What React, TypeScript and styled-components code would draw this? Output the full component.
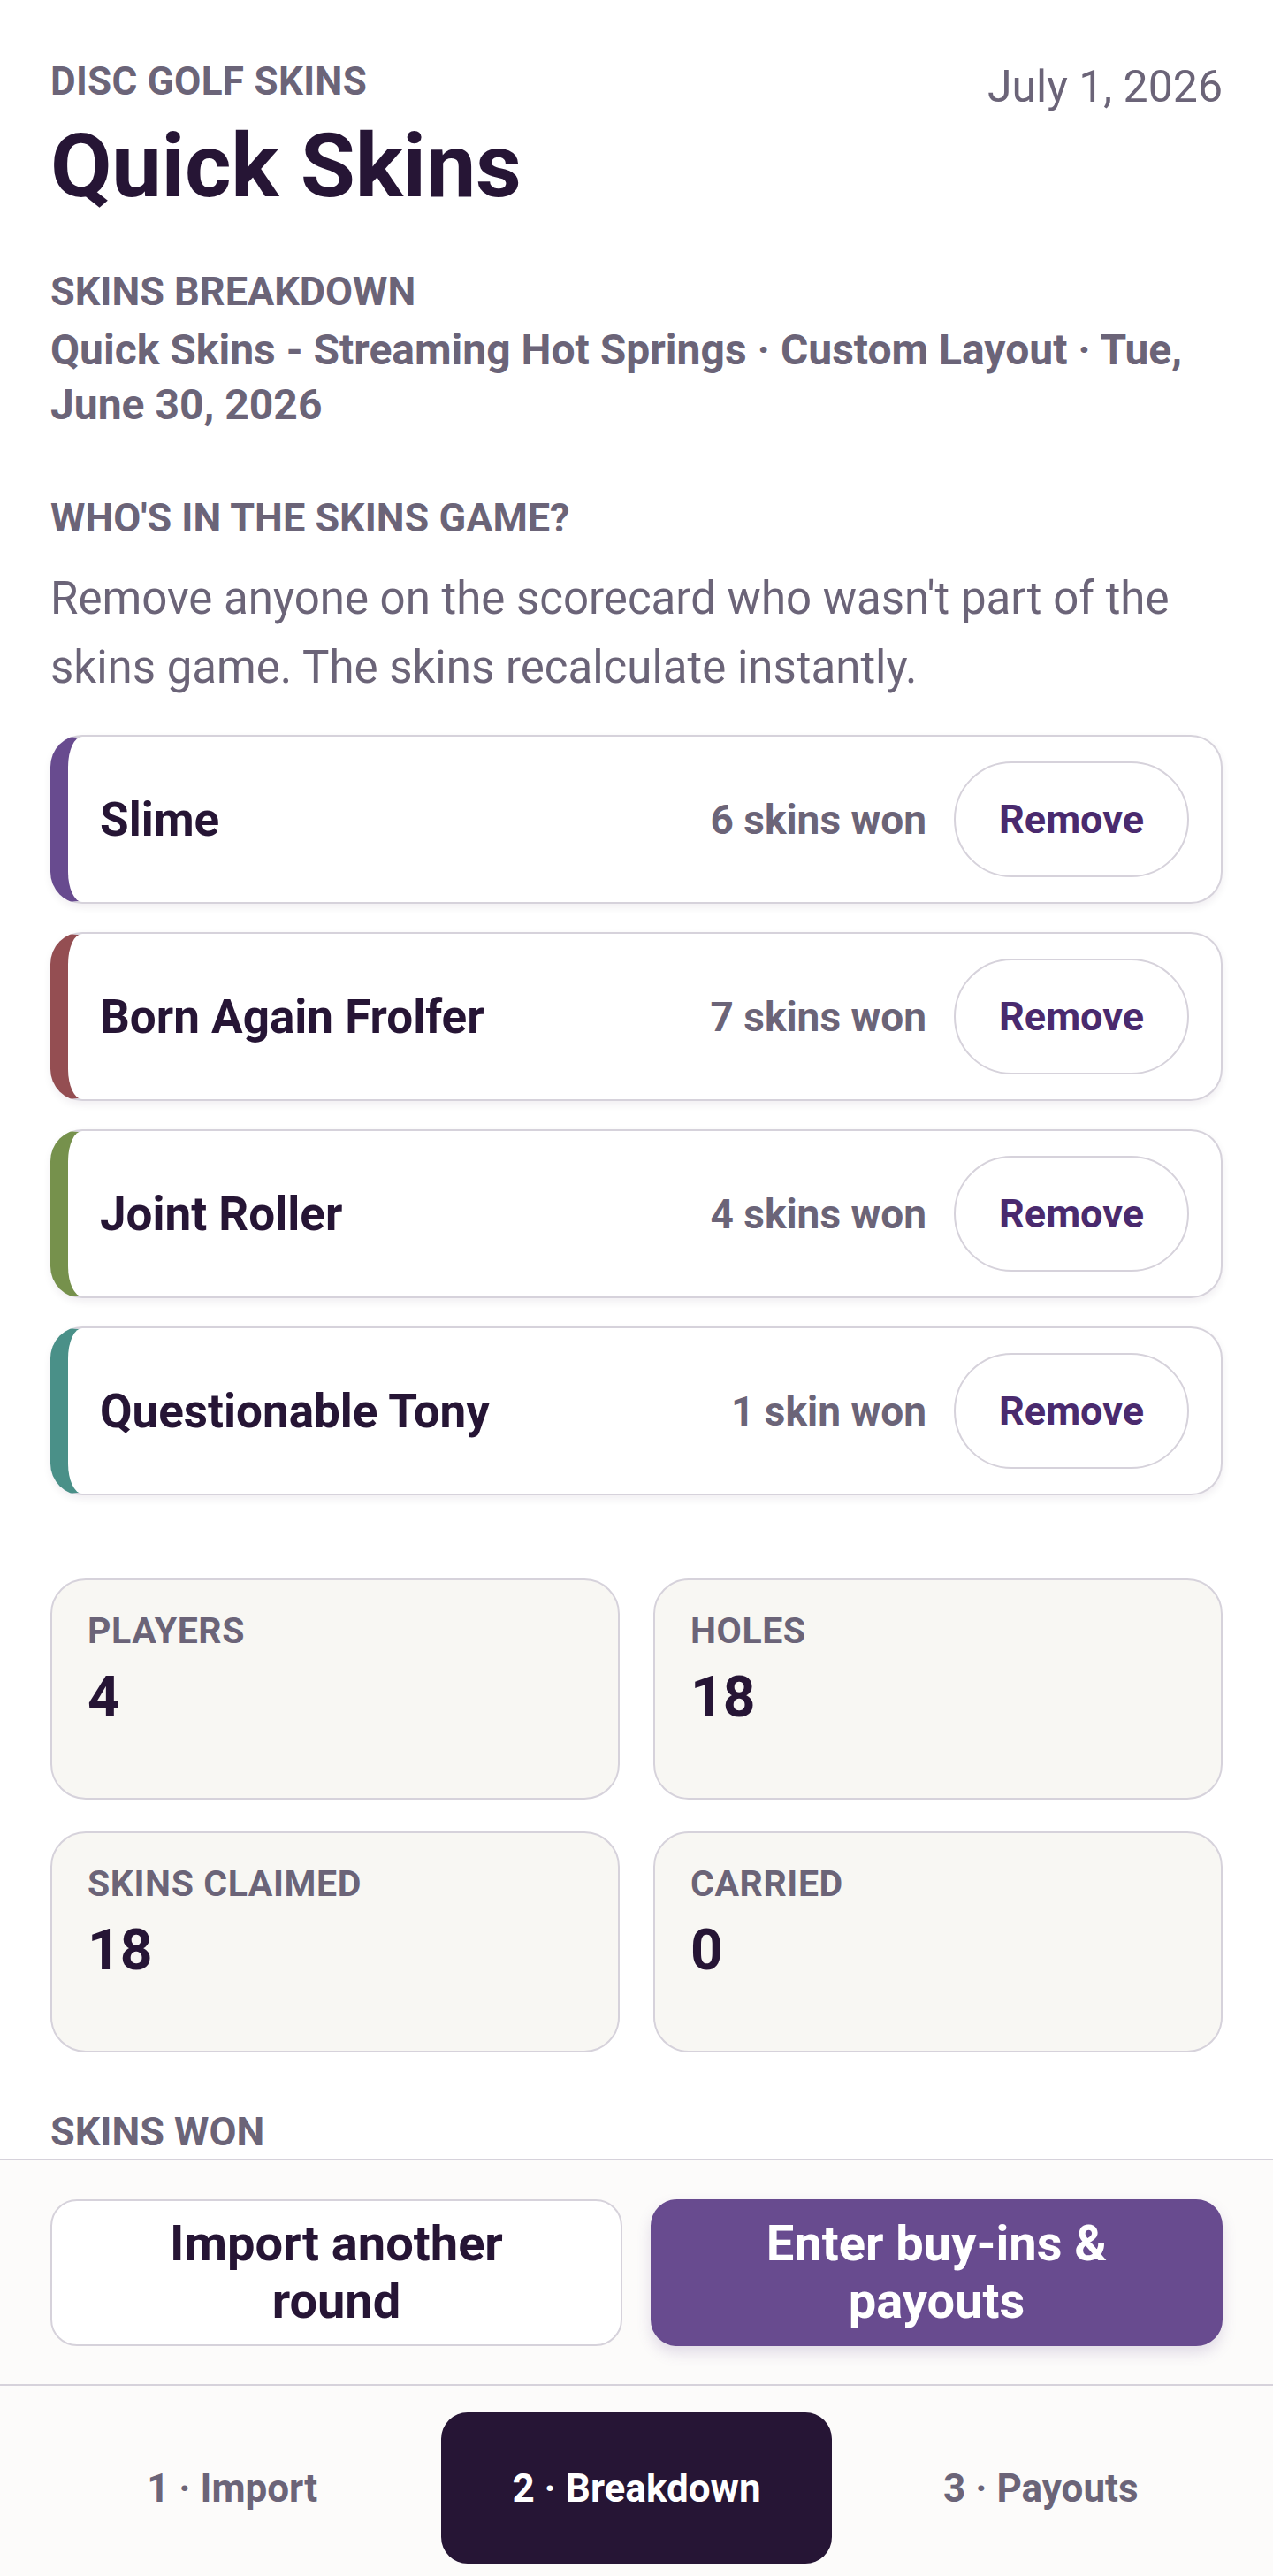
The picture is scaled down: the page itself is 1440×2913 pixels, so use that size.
import React from "react";
import styled, { createGlobalStyle } from "styled-components";

const GlobalStyle = createGlobalStyle`
  * { box-sizing: border-box; }
  html, body { margin: 0; padding: 0; background: #ffffff; }
  body {
    font-family: Roboto, "Noto Sans", "Liberation Sans", Arial, sans-serif;
    color: #261535;
    -webkit-font-smoothing: antialiased;
  }
`;

const ink = "#261535";
const muted = "#6b6478";
const line = "#d6d2db";

const Page = styled.div`
  min-height: 100vh;
  display: flex;
  flex-direction: column;
`;

const Main = styled.main`
  flex: 1;
  padding: 66px 57px 4px;
`;

const HeaderRow = styled.header`
  display: flex;
  justify-content: space-between;
  align-items: flex-start;
`;

const Eyebrow = styled.div`
  font-size: 44px;
  line-height: 53px;
  font-weight: 700;
  color: ${muted};
  text-transform: uppercase;
  letter-spacing: 0.3px;
`;

const Title = styled.h1`
  margin: 14px 0 0;
  font-size: 101px;
  line-height: 110px;
  font-weight: 700;
  color: ${ink};
  letter-spacing: -0.3px;
`;

const DateText = styled.div`
  margin-top: 2px;
  font-size: 50px;
  line-height: 60px;
  font-weight: 400;
  color: ${muted};
`;

const SectionLabel = styled.h2<{ $mt: number }>`
  margin: ${(p) => p.$mt}px 0 0;
  font-size: 45px;
  line-height: 53px;
  font-weight: 700;
  color: ${muted};
  text-transform: uppercase;
`;

const Subtitle = styled.p`
  margin: 9px 0 0;
  font-size: 48px;
  line-height: 62px;
  font-weight: 700;
  color: ${muted};
`;

const Body = styled.p`
  margin: 26px 0 0;
  font-size: 51px;
  line-height: 78px;
  font-weight: 400;
  color: ${muted};
`;

const PlayerList = styled.ul`
  list-style: none;
  margin: 37px 0 0;
  padding: 0;
  display: grid;
  gap: 32px;
`;

const PlayerCard = styled.li<{ $accent: string }>`
  height: 191px;
  display: flex;
  align-items: center;
  padding: 0 36px;
  background: #ffffff;
  border: 2px solid ${line};
  border-left: 20px solid ${(p) => p.$accent};
  border-radius: 36px;
  box-shadow: 0 4px 10px rgba(38, 21, 53, 0.07);
`;

const PlayerName = styled.span`
  flex: 1;
  font-size: 53px;
  font-weight: 700;
  color: ${ink};
`;

const SkinsCount = styled.span`
  margin-right: 31px;
  font-size: 46px;
  font-weight: 700;
  color: ${muted};
`;

const RemoveButton = styled.button`
  width: 266px;
  height: 131px;
  border-radius: 999px;
  border: 2px solid ${line};
  background: #ffffff;
  font-family: inherit;
  font-size: 45px;
  font-weight: 700;
  color: #4a2a6e;
  cursor: pointer;
`;

const StatsGrid = styled.div`
  margin-top: 94px;
  display: grid;
  grid-template-columns: 1fr 1fr;
  column-gap: 38px;
  row-gap: 36px;
`;

const StatCard = styled.div`
  height: 250px;
  padding: 33px 40px;
  background: #f8f7f3;
  border: 2px solid ${line};
  border-radius: 40px;
`;

const StatLabel = styled.div`
  font-size: 41px;
  line-height: 48px;
  font-weight: 700;
  color: ${muted};
  text-transform: uppercase;
  letter-spacing: 0.6px;
`;

const StatValue = styled.div`
  margin-top: 14px;
  font-size: 64px;
  line-height: 76px;
  font-weight: 700;
  color: ${ink};
`;

const Footer = styled.footer`
  position: sticky;
  bottom: 0;
  background: #fcfbfa;
`;

const ActionBar = styled.div`
  border-top: 2px solid ${line};
  padding: 44px 57px 43px;
  display: grid;
  grid-template-columns: 1fr 1fr;
  gap: 32px;
`;

const ActionButton = styled.button<{ $primary?: boolean }>`
  height: 166px;
  padding: 0 64px;
  border-radius: 30px;
  border: 2px solid ${(p) => (p.$primary ? "#684b8f" : line)};
  background: ${(p) => (p.$primary ? "#684b8f" : "#ffffff")};
  color: ${(p) => (p.$primary ? "#ffffff" : ink)};
  box-shadow: ${(p) => (p.$primary ? "0 8px 16px rgba(104, 75, 143, 0.18)" : "none")};
  font-family: inherit;
  font-size: 56px;
  line-height: 65px;
  font-weight: 700;
  text-align: center;
  cursor: pointer;
`;

const Nav = styled.nav`
  border-top: 2px solid ${line};
  padding: 30px 42px 14px;
  display: grid;
  grid-template-columns: repeat(3, 1fr);
  gap: 16px;
`;

const Tab = styled.button<{ $active?: boolean }>`
  height: 171px;
  border: none;
  border-radius: 30px;
  background: ${(p) => (p.$active ? "#261535" : "transparent")};
  color: ${(p) => (p.$active ? "#ffffff" : muted)};
  font-family: inherit;
  font-size: 44px;
  font-weight: 700;
  cursor: pointer;
`;

const players = [
  { name: "Slime", won: "6 skins won", color: "#684b8f" },
  { name: "Born Again Frolfer", won: "7 skins won", color: "#944e52" },
  { name: "Joint Roller", won: "4 skins won", color: "#76914c" },
  { name: "Questionable Tony", won: "1 skin won", color: "#4a9088" },
];

const stats = [
  { label: "Players", value: "4" },
  { label: "Holes", value: "18" },
  { label: "Skins claimed", value: "18" },
  { label: "Carried", value: "0" },
];

export default function App() {
  return (
    <>
      <GlobalStyle />
      <Page>
        <Main>
          <HeaderRow>
            <div>
              <Eyebrow>Disc Golf Skins</Eyebrow>
              <Title>Quick Skins</Title>
            </div>
            <DateText>July 1, 2026</DateText>
          </HeaderRow>

          <SectionLabel $mt={60}>Skins Breakdown</SectionLabel>
          <Subtitle>
            Quick Skins - Streaming Hot Springs · Custom Layout · Tue, June 30, 2026
          </Subtitle>

          <SectionLabel $mt={70}>Who's in the skins game?</SectionLabel>
          <Body>
            Remove anyone on the scorecard who wasn't part of the skins game. The skins
            recalculate instantly.
          </Body>

          <PlayerList>
            {players.map((p) => (
              <PlayerCard key={p.name} $accent={p.color}>
                <PlayerName>{p.name}</PlayerName>
                <SkinsCount>{p.won}</SkinsCount>
                <RemoveButton type="button">Remove</RemoveButton>
              </PlayerCard>
            ))}
          </PlayerList>

          <StatsGrid>
            {stats.map((s) => (
              <StatCard key={s.label}>
                <StatLabel>{s.label}</StatLabel>
                <StatValue>{s.value}</StatValue>
              </StatCard>
            ))}
          </StatsGrid>

          <SectionLabel $mt={63}>Skins won</SectionLabel>
        </Main>

        <Footer>
          <ActionBar>
            <ActionButton type="button">Import another round</ActionButton>
            <ActionButton type="button" $primary>
              Enter buy-ins &amp; payouts
            </ActionButton>
          </ActionBar>
          <Nav>
            <Tab type="button">1 · Import</Tab>
            <Tab type="button" $active>
              2 · Breakdown
            </Tab>
            <Tab type="button">3 · Payouts</Tab>
          </Nav>
        </Footer>
      </Page>
    </>
  );
}
